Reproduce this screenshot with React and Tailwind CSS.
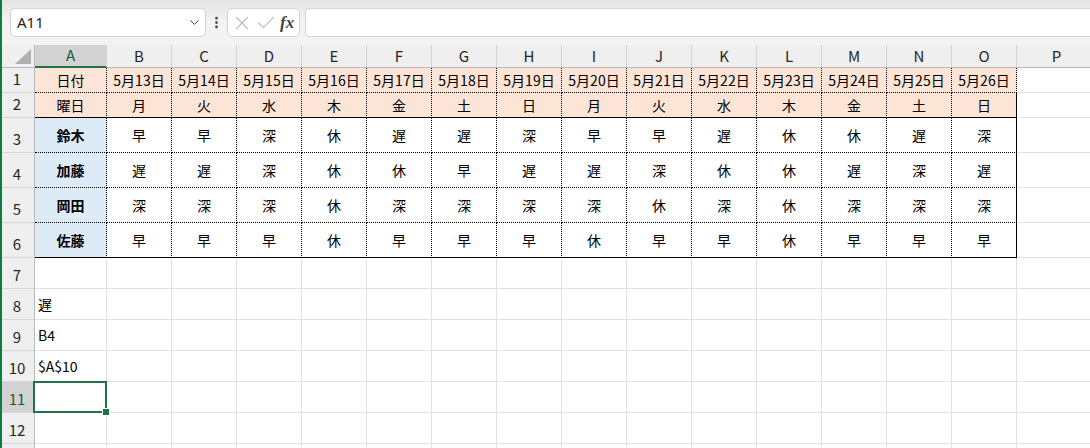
import { ChevronDown, EllipsisVertical, X, Check } from "lucide-react";

const columns = ["A", "B", "C", "D", "E", "F", "G", "H", "I", "J", "K", "L", "M", "N", "O", "P"];

const dates = [13, 14, 15, 16, 17, 18, 19, 20, 21, 22, 23, 24, 25, 26].map((d) => `5月${d}日`);
const weekdays = ["月", "火", "水", "木", "金", "土", "日", "月", "火", "水", "木", "金", "土", "日"];

const shifts = [
  { name: "鈴木", days: "早早深休遅遅深早早遅休休遅深" },
  { name: "加藤", days: "遅遅深休休早遅遅深休休遅深遅" },
  { name: "岡田", days: "深深深休深深深深休深休深深深" },
  { name: "佐藤", days: "早早早休早早早休早早休早早早" },
];

// border strings, written out in full so tailwind picks them up
const R_DOT = "[border-right:1px_dotted_#000]";
const R_SOLID = "[border-right:1px_solid_#000]";
const R_GRID = "[border-right:1px_solid_#e1e1e1]";
const B_DOT = "[border-bottom:1px_dotted_#000]";
const B_SOLID = "[border-bottom:1px_solid_#000]";
const B_GRID = "[border-bottom:1px_solid_#e1e1e1]";

function colWidth(i) {
  if (i === 0) return "w-[72px]";
  if (i === 15) return "w-[80px]";
  return "w-[65px]";
}

function Cell({ row, col, children, className = "" }) {
  const inTable = row >= 1 && row <= 6 && col <= 14;
  let right = R_GRID;
  let bottom = B_GRID;
  if (inTable) {
    right = col === 14 && row >= 2 ? R_SOLID : R_DOT;
    bottom = row === 2 || row === 6 ? B_SOLID : B_DOT;
  }
  let bg = "";
  if (inTable && row <= 2) bg = "bg-[#fce4d6]";
  else if (inTable && col === 0) bg = "bg-[#ddebf7]";
  return (
    <div
      className={`relative flex h-full shrink-0 items-center box-border ${colWidth(col)} ${right} ${bottom} ${bg} ${className}`}
    >
      {children}
    </div>
  );
}

const rowHeights = {
  1: "h-[25px]",
  2: "h-[25px]",
  3: "h-[35px]",
  4: "h-[35px]",
  5: "h-[35px]",
  6: "h-[35px]",
};

function Row({ n, label = n, children }) {
  const selected = n === 11;
  return (
    <div className={`flex ${rowHeights[n] || "h-[31px]"}`}>
      <div
        className={`flex h-full w-[35px] shrink-0 items-end justify-center pb-[2px] text-[15px] box-border border-r border-b border-r-[#bababa] border-b-[#d6d6d6] ${
          selected ? "bg-[#d2d2d2] text-[#185c37]" : "bg-[#efefef] text-[#262626]"
        }`}
      >
        {label}
      </div>
      {children}
    </div>
  );
}

function EmptyCells({ row, from = 0 }) {
  return columns.slice(from).map((c, i) => <Cell key={c} row={row} col={from + i} />);
}

export default function App() {
  return (
    <div
      className="relative h-[448px] w-[1090px] overflow-hidden bg-white text-black"
      style={{ fontFamily: '"Noto Sans CJK JP", "Noto Sans", sans-serif' }}
    >
      {/* formula bar */}
      <div className="flex h-[45px] items-start bg-gradient-to-b from-[#e4e4e4] via-[#f3f3f3] to-[#f3f3f3] pt-[8px] pl-[10px]">
        <div className="flex h-[29px] w-[196px] items-center justify-between rounded-[5px] border border-[#d4d4d4] bg-white pl-[6px] pr-[3px]">
          <span className="text-[15px] text-[#242424]" style={{ fontFamily: '"Noto Sans", sans-serif' }}>
            A11
          </span>
          <ChevronDown size={15} strokeWidth={1.6} className="text-[#424242]" />
        </div>
        <div className="flex h-[29px] w-[21px] items-center justify-center">
          <EllipsisVertical size={15} strokeWidth={2.4} className="text-[#424242]" />
        </div>
        <div className="flex h-[29px] w-[73px] items-center gap-[2px] rounded-[5px] border border-[#d4d4d4] bg-white pl-[3px]">
          <X size={22} strokeWidth={1.3} className="text-[#bdbdbd]" />
          <Check size={22} strokeWidth={1.3} className="text-[#bdbdbd]" />
          <span
            className="ml-[1px] text-[17px] italic font-semibold text-[#444]"
            style={{ fontFamily: '"Liberation Serif", serif' }}
          >
            fx
          </span>
        </div>
        <div className="ml-[5px] h-[29px] flex-1 rounded-l-[5px] border border-r-0 border-[#d4d4d4] bg-white" />
      </div>

      {/* column headers */}
      <div className="flex h-[23px]">
        <div className="relative h-full w-[35px] shrink-0 box-border border-r border-b border-r-[#bababa] border-b-[#bababa] bg-[#efefef]">
          {/* select-all corner triangle */}
          <span className="absolute right-[3px] bottom-[3px] block h-0 w-0 border-l-[16px] border-b-[15px] border-l-transparent border-b-[#b0b0b0]" />
        </div>
        {columns.map((c, i) => (
          <div
            key={c}
            className={`flex h-full shrink-0 items-center justify-center text-[15px] box-border border-r border-r-[#d4d4d4] ${colWidth(i)} ${
              i === 0
                ? "bg-[#d2d2d2] text-[#185c37] border-b-2 border-b-[#217346]"
                : "bg-[#efefef] text-[#262626] border-b border-b-[#bababa]"
            }`}
          >
            {c}
          </div>
        ))}
      </div>

      {/* row 1: dates */}
      <Row n={1}>
        <Cell row={1} col={0} className="justify-center text-[14px]">日付</Cell>
        {dates.map((d, i) => (
          <Cell key={d} row={1} col={i + 1} className="justify-center text-[14px]">
            {d}
          </Cell>
        ))}
        <Cell row={1} col={15} />
      </Row>

      {/* row 2: weekdays */}
      <Row n={2}>
        <Cell row={2} col={0} className="justify-center text-[14px]">曜日</Cell>
        {weekdays.map((w, i) => (
          <Cell key={i} row={2} col={i + 1} className="justify-center text-[14px]">
            {w}
          </Cell>
        ))}
        <Cell row={2} col={15} />
      </Row>

      {/* rows 3-6: shifts */}
      {shifts.map((s, r) => (
        <Row key={s.name} n={r + 3}>
          <Cell row={r + 3} col={0} className="justify-center text-[14px] font-bold">
            {s.name}
          </Cell>
          {[...s.days].map((d, i) => (
            <Cell key={i} row={r + 3} col={i + 1} className="justify-center text-[14px]">
              {d}
            </Cell>
          ))}
          <Cell row={r + 3} col={15} />
        </Row>
      ))}

      <Row n={7}>
        <EmptyCells row={7} />
      </Row>

      {[
        [8, "遅"],
        [9, "B4"],
        [10, "$A$10"],
      ].map(([n, text]) => (
        <Row key={n} n={n}>
          <Cell row={n} col={0} className="pl-[3px] text-[14px]">
            {text}
          </Cell>
          <EmptyCells row={n} from={1} />
        </Row>
      ))}

      <Row n={11}>
        <Cell row={11} col={0}>
          {/* active cell outline */}
          <div className="absolute -top-[1px] -left-[2px] -right-[1px] -bottom-[1px] z-10 border-2 border-[#217346]">
            <div className="absolute -right-[4px] -bottom-[4px] h-[6px] w-[6px] bg-[#217346] outline outline-1 outline-white" />
          </div>
        </Cell>
        <EmptyCells row={11} from={1} />
      </Row>

      <Row n={12}>
        <EmptyCells row={12} />
      </Row>
      {/* row 13 is only a sliver at the bottom edge */}
      <Row n={13} label="">
        <EmptyCells row={13} />
      </Row>

      {/* window edge */}
      <div className="absolute top-0 bottom-0 left-0 z-20 w-[2px] bg-[#107c41]" />
    </div>
  );
}
